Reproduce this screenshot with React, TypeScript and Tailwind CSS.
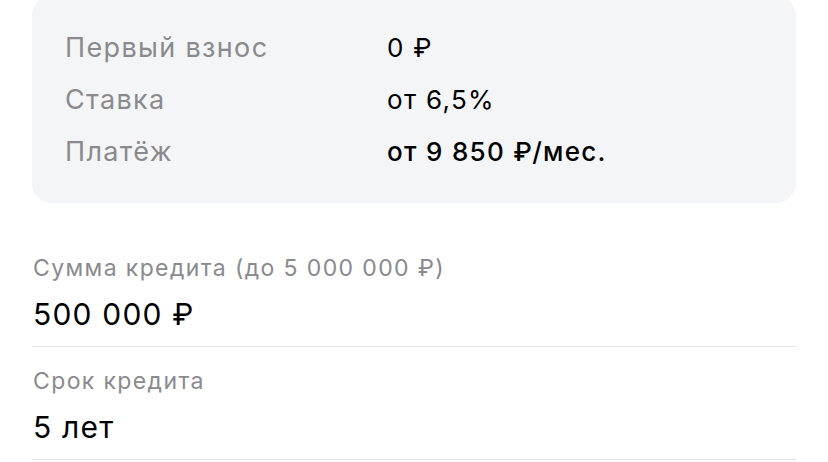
const summary = [
  { label: 'Первый взнос', value: '0 ₽' },
  { label: 'Ставка', value: 'от 6,5%' },
  { label: 'Платёж', value: 'от 9 850 ₽/мес.', strong: true },
];

const fields = [
  { label: 'Сумма кредита (до 5 000 000 ₽)', value: '500 000 ₽' },
  { label: 'Срок кредита', value: '5 лет' },
];

export default function App() {
  return (
    <div className="w-[828px] h-[462px] overflow-hidden bg-white px-8 font-['Inter','Noto_Sans',sans-serif]">
      <div className="-mt-1 rounded-[20px] bg-[#f4f5f7] pl-[33px] pt-[26px] pb-[25px]">
        {summary.map((row) => (
          <div key={row.label} className="flex h-[52px] items-center leading-[52px]">
            <span className="w-[322px] text-[27px] tracking-[0.05em] text-[#8a8a8e]">{row.label}</span>
            <span
              className={
                row.strong
                  ? 'text-[26px] font-medium tracking-[0.05em] text-black'
                  : 'text-[26px] tracking-[0.05em] text-black'
              }
            >
              {row.value}
            </span>
          </div>
        ))}
      </div>

      <div className="mt-[51px]">
        {fields.map((f, i) => (
          <div
            key={f.label}
            className={
              i === 0
                ? 'border-b border-[#e3e3e8] pb-[14px] pl-px'
                : 'border-b border-[#e3e3e8] pt-[20px] pb-[14px] pl-px'
            }
          >
            <p className="text-[23px] leading-[28px] tracking-[0.06em] text-[#8a8a8e]">{f.label}</p>
            <p className="mt-[14px] text-[30px] leading-[36px] tracking-[0.04em] text-black">{f.value}</p>
          </div>
        ))}
      </div>
    </div>
  );
}
